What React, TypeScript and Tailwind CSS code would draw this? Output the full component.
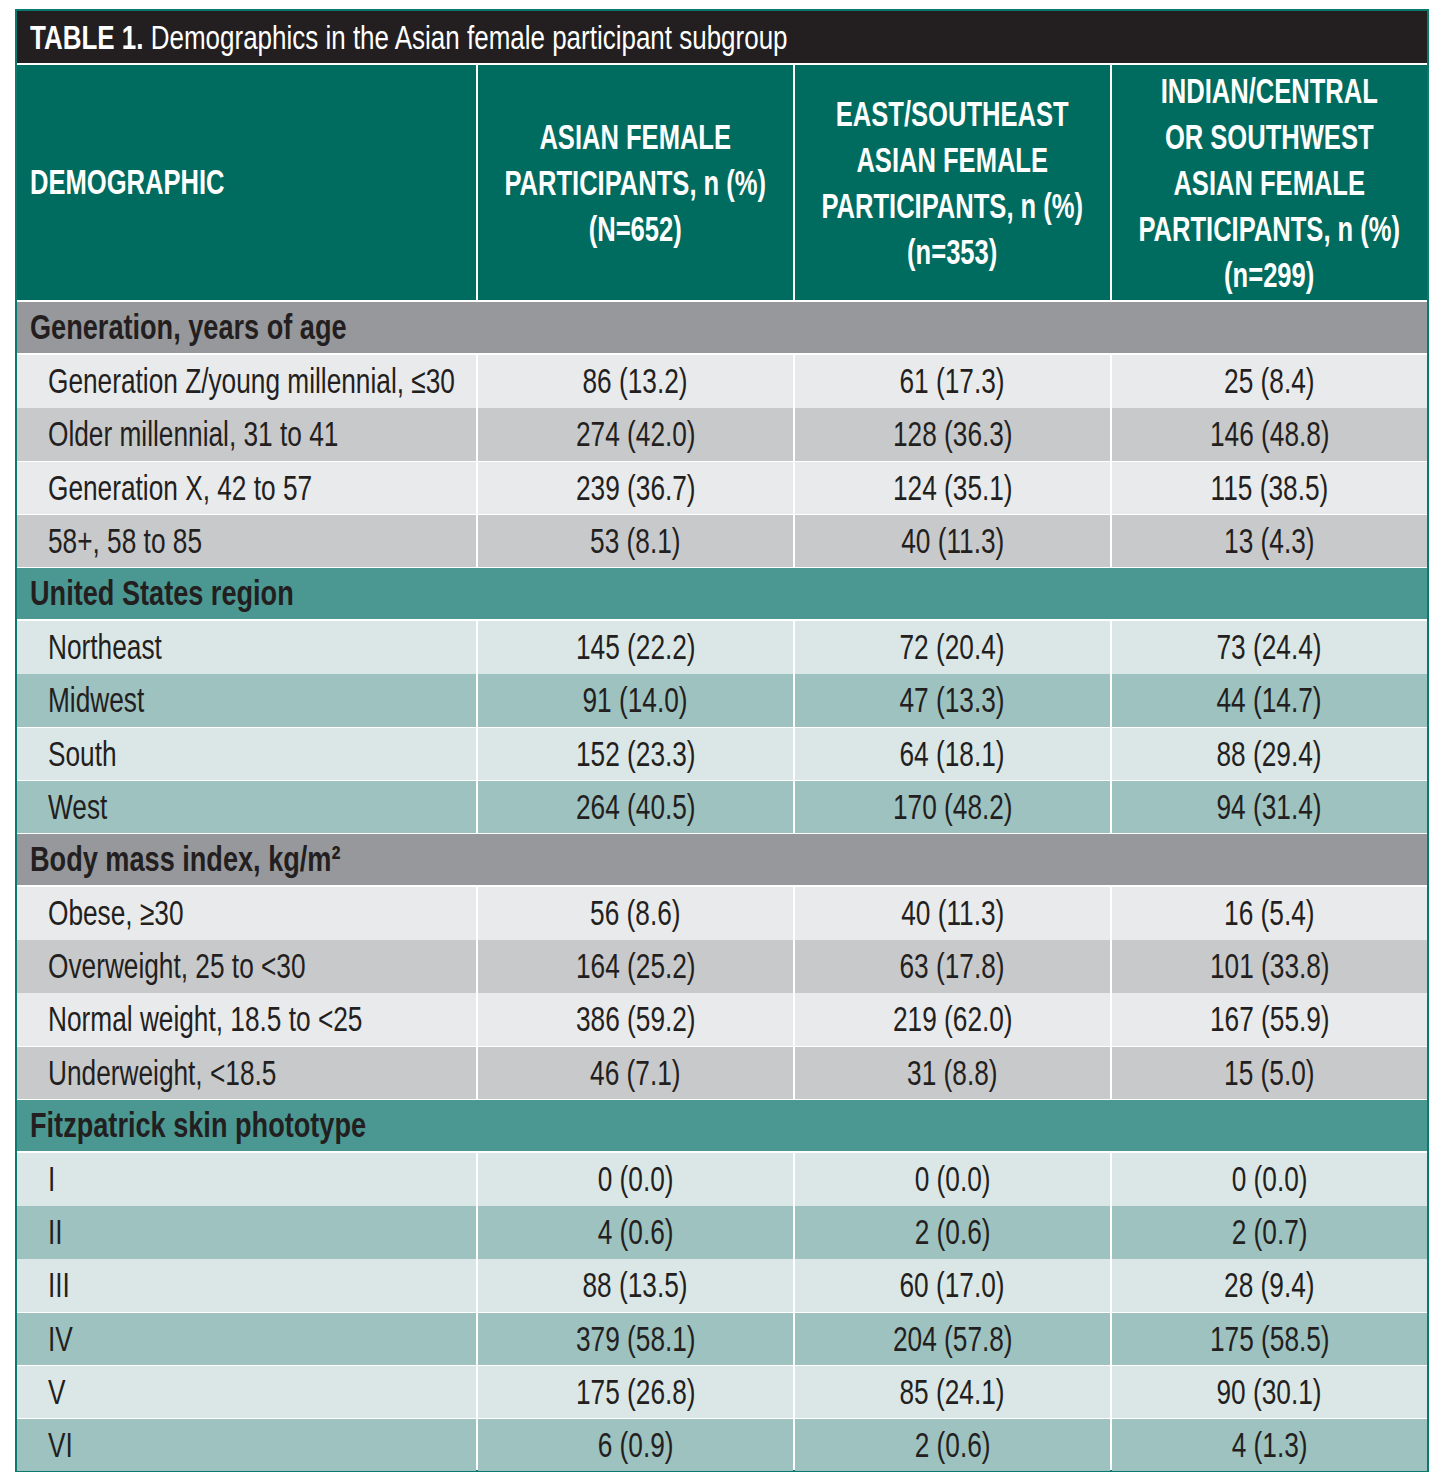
const font = "font-['Liberation_Sans',Arial,sans-serif]";

type Row = { label: string; values: [string, string, string] };
type Section = { title: string; tone: "gray" | "teal"; rows: Row[] };

const sections: Section[] = [
  {
    title: "Generation, years of age",
    tone: "gray",
    rows: [
      { label: "Generation Z/young millennial, ≤30", values: ["86 (13.2)", "61 (17.3)", "25 (8.4)"] },
      { label: "Older millennial, 31 to 41", values: ["274 (42.0)", "128 (36.3)", "146 (48.8)"] },
      { label: "Generation X, 42 to 57", values: ["239 (36.7)", "124 (35.1)", "115 (38.5)"] },
      { label: "58+, 58 to 85", values: ["53 (8.1)", "40 (11.3)", "13 (4.3)"] },
    ],
  },
  {
    title: "United States region",
    tone: "teal",
    rows: [
      { label: "Northeast", values: ["145 (22.2)", "72 (20.4)", "73 (24.4)"] },
      { label: "Midwest", values: ["91 (14.0)", "47 (13.3)", "44 (14.7)"] },
      { label: "South", values: ["152 (23.3)", "64 (18.1)", "88 (29.4)"] },
      { label: "West", values: ["264 (40.5)", "170 (48.2)", "94 (31.4)"] },
    ],
  },
  {
    title: "Body mass index, kg/m²",
    tone: "gray",
    rows: [
      { label: "Obese, ≥30", values: ["56 (8.6)", "40 (11.3)", "16 (5.4)"] },
      { label: "Overweight, 25 to <30", values: ["164 (25.2)", "63 (17.8)", "101 (33.8)"] },
      { label: "Normal weight, 18.5 to <25", values: ["386 (59.2)", "219 (62.0)", "167 (55.9)"] },
      { label: "Underweight, <18.5", values: ["46 (7.1)", "31 (8.8)", "15 (5.0)"] },
    ],
  },
  {
    title: "Fitzpatrick skin phototype",
    tone: "teal",
    rows: [
      { label: "I", values: ["0 (0.0)", "0 (0.0)", "0 (0.0)"] },
      { label: "II", values: ["4 (0.6)", "2 (0.6)", "2 (0.7)"] },
      { label: "III", values: ["88 (13.5)", "60 (17.0)", "28 (9.4)"] },
      { label: "IV", values: ["379 (58.1)", "204 (57.8)", "175 (58.5)"] },
      { label: "V", values: ["175 (26.8)", "85 (24.1)", "90 (30.1)"] },
      { label: "VI", values: ["6 (0.9)", "2 (0.6)", "4 (1.3)"] },
    ],
  },
];

const tones = {
  gray: { head: "bg-[#97989c]", light: "bg-[#e9eaec]", dark: "bg-[#c8c9cb]" },
  teal: { head: "bg-[#4b9892]", light: "bg-[#dbe7e7]", dark: "bg-[#9dc2c0]" },
};

const headers = [
  ["ASIAN FEMALE", "PARTICIPANTS, n (%)", "(N=652)"],
  ["EAST/SOUTHEAST", "ASIAN FEMALE", "PARTICIPANTS, n (%)", "(n=353)"],
  ["INDIAN/CENTRAL", "OR SOUTHWEST", "ASIAN FEMALE", "PARTICIPANTS, n (%)", "(n=299)"],
];

const cols = "grid grid-cols-[459px_315px_315px_315px] gap-x-[2px]";

export default function App() {
  return (
    <div className={`bg-white min-h-[1476px] pt-[9px] pl-[15px] ${font} text-[#231f20]`}>
      <div className="w-[1414px] border-2 border-[#0b7a6e] bg-white flex flex-col gap-[2px]">
        {/* Title */}
        <div className="h-[52px] bg-[#231f20] text-white flex items-center px-[13px] text-[34px] leading-none">
          <span className="inline-block whitespace-nowrap origin-left scale-x-[0.764]">
            <span className="font-bold">TABLE 1.</span> Demographics in the Asian female participant subgroup
          </span>
        </div>

        {/* Column headers */}
        <div className={`${cols} h-[235px] bg-white`}>
          <div className="bg-[#006c60] text-white font-bold text-[35px] flex items-center px-[13px]">
            <span className="inline-block origin-left scale-x-[0.73]">DEMOGRAPHIC</span>
          </div>
          {headers.map((lines, i) => (
            <div
              key={i}
              className="bg-[#006c60] text-white font-bold text-[35px] leading-[46px] flex items-center justify-center"
            >
              <div className="shrink-0 flex flex-col items-center whitespace-nowrap text-center scale-x-[0.73]">
                {lines.map((l) => (
                  <span key={l}>{l}</span>
                ))}
              </div>
            </div>
          ))}
        </div>

        {/* Body */}
        {sections.map((section, si) => {
          const t = tones[section.tone];
          return (
            <div key={si} className="flex flex-col gap-[2px]">
              <div className={`${t.head} h-[51.2px] flex items-center px-[13px] font-bold text-[35px]`}>
                <span className="inline-block whitespace-nowrap origin-left scale-x-[0.775]">{section.title}</span>
              </div>
              {section.rows.map((row, ri) => {
                const bg = ri % 2 === 0 ? t.light : t.dark;
                return (
                  <div key={ri} className={`${cols} h-[51.2px] text-[35px]`}>
                    <div className={`${bg} flex items-center pl-[31px]`}>
                      <span className="inline-block whitespace-nowrap origin-left scale-x-75">{row.label}</span>
                    </div>
                    {row.values.map((v, vi) => (
                      <div key={vi} className={`${bg} flex items-center justify-center`}>
                        <span className="inline-block whitespace-nowrap scale-x-75">{v}</span>
                      </div>
                    ))}
                  </div>
                );
              })}
            </div>
          );
        })}
      </div>
    </div>
  );
}
